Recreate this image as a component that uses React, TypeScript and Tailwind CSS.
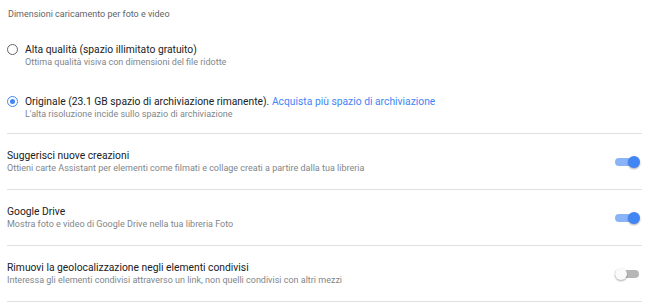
import { useState } from "react"

type ToggleRow = {
  title: string
  subtitle: string
  on: boolean
}

const rows: ToggleRow[] = [
  {
    title: "Suggerisci nuove creazioni",
    subtitle: "Ottieni carte Assistant per elementi come filmati e collage creati a partire dalla tua libreria",
    on: true,
  },
  {
    title: "Google Drive",
    subtitle: "Mostra foto e video di Google Drive nella tua libreria Foto",
    on: true,
  },
  {
    title: "Rimuovi la geolocalizzazione negli elementi condivisi",
    subtitle: "Interessa gli elementi condivisi attraverso un link, non quelli condivisi con altri mezzi",
    on: false,
  },
]

function Radio({ checked }: { checked: boolean }) {
  return (
    <span
      className={`flex h-[11px] w-[11px] shrink-0 items-center justify-center rounded-full border-[1.5px] ${
        checked ? "border-[#4285f4]" : "border-[#5f6368]"
      }`}
    >
      {checked && <span className="h-[5px] w-[5px] rounded-full bg-[#4285f4]" />}
    </span>
  )
}

function Switch({ on, onClick }: { on: boolean; onClick: () => void }) {
  return (
    <button onClick={onClick} className="relative mr-[2px] h-[12px] w-[26px] shrink-0">
      <span
        className={`absolute left-[1px] right-[1px] top-[2px] h-[8px] rounded-full ${
          on ? "bg-[#8ab4f8]" : "bg-[#b7b7b7]"
        }`}
      />
      <span
        className={`absolute top-0 h-[12px] w-[12px] rounded-full shadow-[0_1px_2px_rgba(0,0,0,0.35)] ${
          on ? "right-0 bg-[#4285f4]" : "left-[1px] bg-[#fafafa]"
        }`}
      />
    </button>
  )
}

export default function App() {
  const [quality, setQuality] = useState<"alta" | "originale">("originale")
  const [toggles, setToggles] = useState(rows.map((r) => r.on))

  return (
    <div
      className="h-[308px] w-[650px] bg-white pl-[7px] pr-[8px]"
      style={{ fontFamily: "Roboto, 'Liberation Sans', sans-serif" }}
    >
      {/* Upload size */}
      <div className="border-b border-[#e0e0e0] pb-[12px] pt-[8px]">
        <div className="pl-[1px] text-[9px] leading-[13px] text-[#5f6368]">
          Dimensioni caricamento per foto e video
        </div>

        <div className="mt-[22px] flex items-start gap-[7px] cursor-pointer" onClick={() => setQuality("alta")}>
          <div className="pt-[1px]">
            <Radio checked={quality === "alta"} />
          </div>
          <div>
            <div className="text-[10.3px] leading-[13px] text-[#202124]">Alta qualità (spazio illimitato gratuito)</div>
            <div className="text-[9px] leading-[13px] text-[#80868b]">
              Ottima qualità visiva con dimensioni del file ridotte
            </div>
          </div>
        </div>

        <div className="mt-[26px] flex items-start gap-[7px] cursor-pointer" onClick={() => setQuality("originale")}>
          <div className="pt-[1px]">
            <Radio checked={quality === "originale"} />
          </div>
          <div>
            <div className="text-[10.3px] leading-[13px] text-[#202124]">
              Originale (23.1 GB spazio di archiviazione rimanente).{" "}
              <a className="text-[#4285f4]">Acquista più spazio di archiviazione</a>
            </div>
            <div className="text-[9px] leading-[13px] text-[#80868b]">
              L'alta risoluzione incide sullo spazio di archiviazione
            </div>
          </div>
        </div>
      </div>

      {/* Toggles */}
      {rows.map((row, i) => (
        <div key={row.title} className="flex items-center border-b border-[#e0e0e0] pb-[14px] pt-[15px]">
          <div className="flex-1">
            <div className="text-[10.3px] leading-[13px] text-[#202124]">{row.title}</div>
            <div className="text-[9px] leading-[13px] text-[#80868b]">{row.subtitle}</div>
          </div>
          <Switch on={toggles[i]} onClick={() => setToggles(toggles.map((t, j) => (j === i ? !t : t)))} />
        </div>
      ))}
    </div>
  )
}
